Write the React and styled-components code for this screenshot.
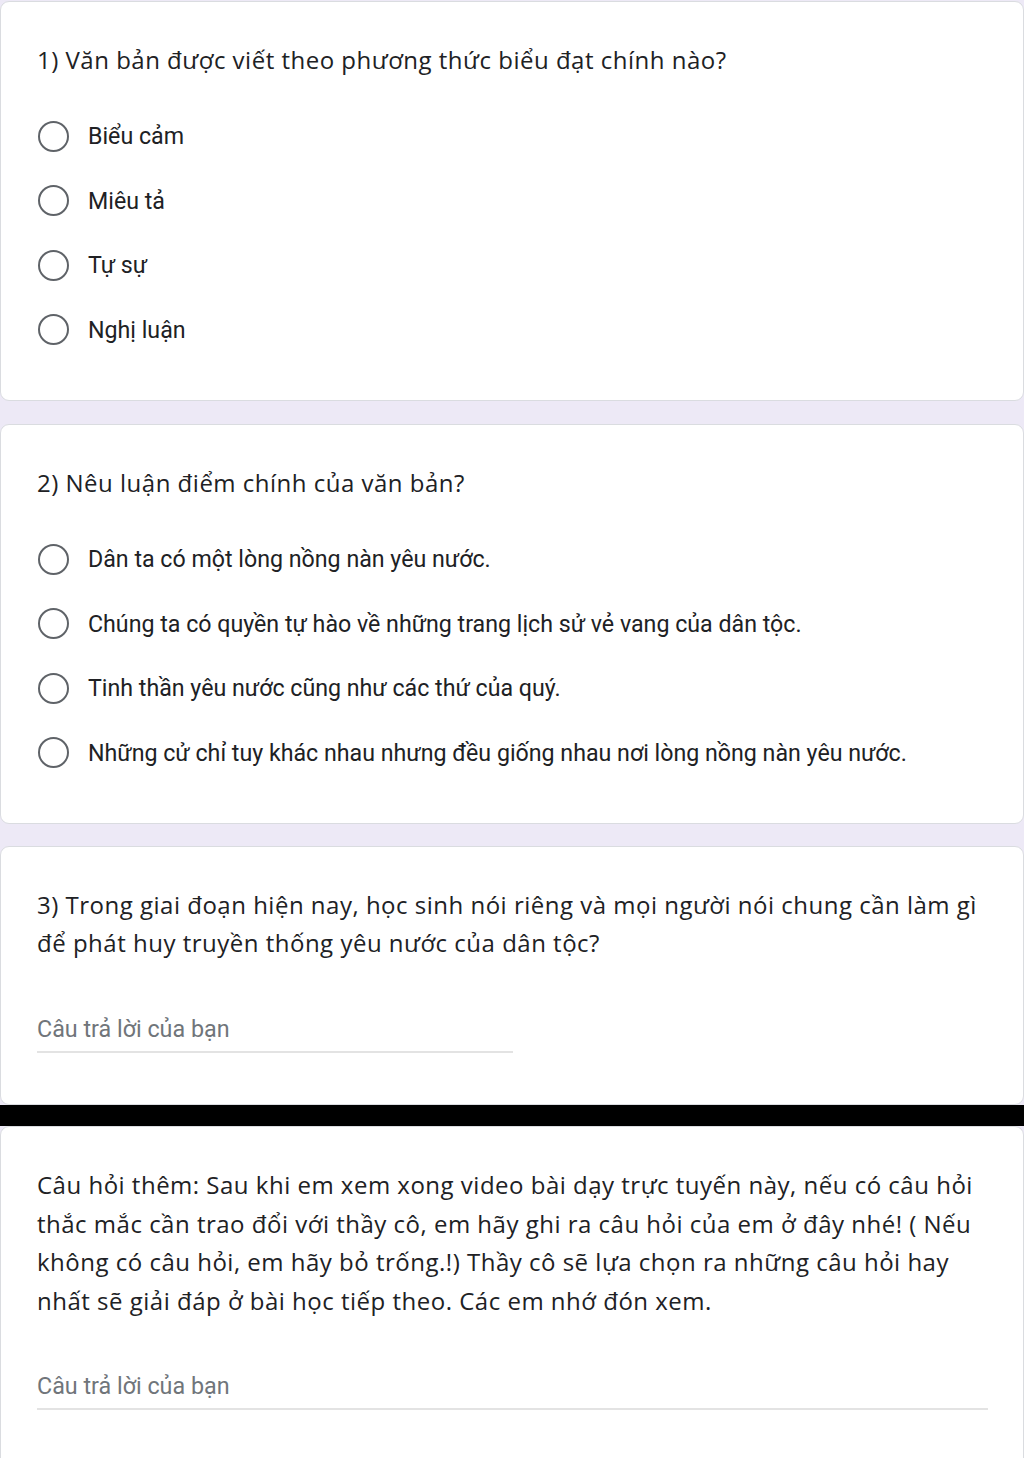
import React from 'react'
import styled, { createGlobalStyle } from 'styled-components'

const GlobalStyle = createGlobalStyle`
  html, body {
    margin: 0;
    padding: 0;
    background: #ede9f6;
  }
  body {
    font-family: Roboto, "Noto Sans", sans-serif;
    color: #202124;
  }
`

const Page = styled.div`
  display: flex;
  flex-direction: column;
  padding-top: 1px;
  min-height: 1458px;
  background: #ede9f6;
`

const Card = styled.section`
  background: #ffffff;
  border: 1px solid #dadce0;
  border-radius: 9px;
  padding: 39px 36px ${props => props.bottom || 38}px 36px;
`

const Gap = styled.div`
  height: ${props => props.size || 22}px;
  background: ${props => props.dark ? '#000000' : 'transparent'};
`

const Title = styled.h2`
  margin: 0;
  font-family: "Open Sans", "Noto Sans", sans-serif;
  font-weight: 400;
  font-size: 24px;
  letter-spacing: 0.5px;
  line-height: ${props => props.lh || 38}px;
  color: #202124;
  white-space: nowrap;
`

const Options = styled.div`
  display: flex;
  flex-direction: column;
  margin-top: 25px;
`

const Option = styled.label`
  display: flex;
  align-items: center;
  height: 64.5px;
  font-family: Roboto, "Noto Sans", sans-serif;
  font-size: 23.2px;
  color: #202124;
`

const Radio = styled.span`
  box-sizing: border-box;
  width: 31px;
  height: 31px;
  margin-left: 1px;
  margin-right: 19px;
  border: 2.5px solid #5f6368;
  border-radius: 50%;
  flex-shrink: 0;
`

const Answer = styled.div`
  width: ${props => props.width}px;
  margin-top: ${props => props.top || 52}px;
  padding-bottom: 7px;
  border-bottom: 2px solid #e3e3e3;
  font-family: Roboto, "Noto Sans", sans-serif;
  font-size: 23.3px;
  line-height: 30px;
  color: #70757a;
`

const ChoiceQuestion = ({ title, options }) => (
  <Card>
    <Title>{title}</Title>
    <Options>
      {options.map(o => (
        <Option key={o}>
          <Radio />
          {o}
        </Option>
      ))}
    </Options>
  </Card>
)

export default function App () {
  return (
    <Page>
      <GlobalStyle />
      <ChoiceQuestion
        title='1) Văn bản được viết theo phương thức biểu đạt chính nào?'
        options={['Biểu cảm', 'Miêu tả', 'Tự sự', 'Nghị luận']}
      />
      <Gap size={23} />
      <ChoiceQuestion
        title='2) Nêu luận điểm chính của văn bản?'
        options={[
          'Dân ta có một lòng nồng nàn yêu nước.',
          'Chúng ta có quyền tự hào về những trang lịch sử vẻ vang của dân tộc.',
          'Tinh thần yêu nước cũng như các thứ của quý.',
          'Những cử chỉ tuy khác nhau nhưng đều giống nhau nơi lòng nồng nàn yêu nước.'
        ]}
      />
      <Gap size={22} />
      <Card bottom={51}>
        <Title>
          3) Trong giai đoạn hiện nay, học sinh nói riêng và mọi người nói chung cần làm gì<br />
          để phát huy truyền thống yêu nước của dân tộc?
        </Title>
        <Answer width={476}>Câu trả lời của bạn</Answer>
      </Card>
      <Gap size={21} dark />
      <Card bottom={60}>
        <Title lh={38.7}>
          Câu hỏi thêm: Sau khi em xem xong video bài dạy trực tuyến này, nếu có câu hỏi<br />
          thắc mắc cần trao đổi với thầy cô, em hãy ghi ra câu hỏi của em ở đây nhé! ( Nếu<br />
          không có câu hỏi, em hãy bỏ trống.!) Thầy cô sẽ lựa chọn ra những câu hỏi hay<br />
          nhất sẽ giải đáp ở bài học tiếp theo. Các em nhớ đón xem.
        </Title>
        <Answer width={951} top={50}>Câu trả lời của bạn</Answer>
      </Card>
    </Page>
  )
}
